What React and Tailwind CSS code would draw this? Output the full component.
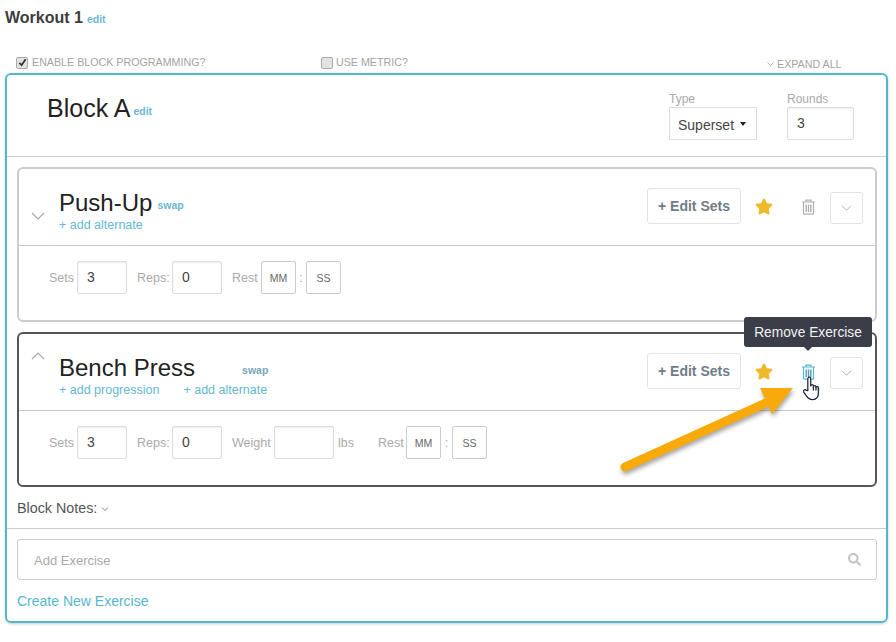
import { FaStar, FaSearch } from "react-icons/fa";

// Small chevron used by the collapse toggles and the row menu
const Chevron = ({ up, className }) => (
  <svg viewBox="0 0 14 8" className={className} fill="none" stroke="currentColor" strokeWidth="1.2">
    <polyline points={up ? "1,7 7,1 13,7" : "1,1 7,7 13,1"} />
  </svg>
);

const Trash = ({ className, bars }) => (
  <svg viewBox="0 0 15 16" className={className} fill="none" stroke="currentColor" strokeWidth="1.2">
    <path d="M1 3h13M5 3V1.2h5V3M2.5 3v11.2c0 .6.4 1 1 1h8c.6 0 1-.4 1-1V3" />
    <path d="M5.2 5.5v7.5M7.5 5.5v7.5M9.8 5.5v7.5" stroke={bars} strokeWidth="1.4" />
  </svg>
);

const Checkbox = ({ checked }) => (
  <div className="flex h-[12px] w-[12px] items-center justify-center rounded-[2px] border border-[#aaa] bg-[#e2e2e2]">
    {checked && (
      <svg viewBox="0 0 10 10" className="h-[9px] w-[9px]" fill="none" stroke="#333" strokeWidth="2">
        <polyline points="1.5,5.5 4,8 8.5,1.5" />
      </svg>
    )}
  </div>
);

const Field = ({ value, width }) => (
  <div className={`flex h-[33px] items-center rounded-[2px] border border-[#ddd] pl-[9px] text-[14px] text-[#444] shadow-[inset_0_1px_2px_rgba(0,0,0,0.08)] ${width}`}>
    {value}
  </div>
);

const TimeBox = ({ label }) => (
  <div className="flex h-[33px] w-[35px] items-center justify-center rounded-[2px] border border-[#ccc] pt-[3px] text-[10.5px] text-[#666]">
    {label}
  </div>
);

const Label = ({ children, className = "" }) => (
  <span className={`pt-[2px] text-[12.5px] text-[#aaa] ${className}`}>{children}</span>
);

const ExerciseHeader = ({ name, open, swapClass, children, hoverTrash }) => (
  <div className="flex h-[77px] border-b border-[#ccc]">
    <div className={`w-[40px] pl-[12px] ${open ? "pt-[18px]" : "pt-[43px]"}`}>
      <Chevron up={open} className="h-[8px] w-[14px] text-[#aaa]" />
    </div>
    <div className="flex-1 pt-[16px]">
      <div className="flex h-[33px] items-baseline">
        <span className="text-[24px] leading-[36px] text-[#222]">{name}</span>
        <span className={`-translate-y-[2px] text-[10.5px] font-bold ${swapClass}`}>swap</span>
      </div>
      <div className="flex gap-[24px] text-[12.5px] leading-[15px] text-[#62b9d2]">{children}</div>
    </div>
    <div className="flex items-start pt-[19px] pr-[12px]">
      <button className="h-[36px] w-[94px] rounded-[3px] border border-[#e3e3e3] text-[14px] font-bold text-[#6f7d89]">
        + Edit Sets
      </button>
      <FaStar className="ml-[14px] mt-[10px] h-[17px] w-[18px] text-[#efb928]" />
      {hoverTrash ? (
        <Trash className="ml-[28px] mt-[11px] h-[16px] w-[15px] text-[#56b7d0]" bars="#4a9fb6" />
      ) : (
        <Trash className="ml-[28px] mt-[11px] h-[16px] w-[15px] text-[#b0b0b0]" bars="#b0b0b0" />
      )}
      <div className="ml-[14px] mt-[4px] flex h-[32px] w-[33px] items-center justify-center rounded-[3px] border border-[#e3e3e3]">
        <Chevron className="h-[6px] w-[11px] text-[#aaa]" />
      </div>
    </div>
  </div>
);

export default function App() {
  return (
    <div className="relative h-[642px] w-[896px] overflow-hidden bg-white font-['Liberation_Sans',Arial,sans-serif]">
      {/* Workout title */}
      <div className="flex h-[27px] items-baseline gap-[4px] pl-[5px] pt-[6px]">
        <span className="text-[16px] font-bold text-[#3d3d3d]">Workout 1</span>
        <span className="text-[10.5px] font-bold text-[#6cb7d3]">edit</span>
      </div>

      {/* Options */}
      <div className="flex h-[46px] items-end pb-[2px] pl-[16px] text-[10.7px] text-[#a3a3a3]">
        <div className="flex w-[305px] items-center gap-[4px]">
          <Checkbox checked />
          <span className="-translate-y-[1px]">ENABLE BLOCK PROGRAMMING?</span>
        </div>
        <div className="flex w-[446px] items-center gap-[3px]">
          <Checkbox />
          <span className="-translate-y-[1px]">USE METRIC?</span>
        </div>
        <div className="flex translate-y-[1px] items-center gap-[3px]">
          <Chevron className="h-[4px] w-[7px] text-[#888]" />
          <span>EXPAND ALL</span>
        </div>
      </div>

      {/* Block card */}
      <div className="ml-[5px] h-[550px] w-[883px] rounded-[6px] border-2 border-[#53b7cf] shadow-[0_1px_3px_rgba(0,0,0,0.2)]">
        <div className="flex h-[82px] justify-between border-b border-[#ccc] pl-[40px] pr-[32px]">
          <div className="flex h-[47px] items-end gap-[3px]">
            <span className="text-[25px] leading-[28px] text-[#222]">Block A</span>
            <span className="pb-[4px] text-[10.5px] font-bold leading-[14px] text-[#6cb7d3]">edit</span>
          </div>
          <div className="flex gap-[30px] pt-[16px]">
            <div>
              <div className="text-[12px] leading-[16px] text-[#aaa]">Type</div>
              <div className="flex h-[33px] w-[88px] items-center gap-[6px] border border-[#ddd] pl-[8px] text-[14px] text-[#444]">
                <span className="pt-[4px]">Superset</span>
                <span className="h-0 w-0 border-x-[3px] border-t-[4px] border-x-transparent border-t-[#222]" />
              </div>
            </div>
            <div>
              <div className="text-[12px] leading-[16px] text-[#aaa]">Rounds</div>
              <Field value="3" width="w-[67px]" />
            </div>
          </div>
        </div>

        {/* Exercises */}
        <div className="ml-[10px] mr-[9px] mt-[10px] flex flex-col gap-[10px]">
          <div className="h-[155px] rounded-[6px] border-2 border-[#ccc]">
            <ExerciseHeader name="Push-Up" swapClass="ml-[5px] text-[#6cb7d3]">
              <span>+ add alternate</span>
            </ExerciseHeader>
            <div className="flex items-center pl-[30px] pt-[15px]">
              <Label className="w-[28px]">Sets</Label>
              <Field value="3" width="w-[50px]" />
              <Label className="ml-[10px] w-[35px]">Reps:</Label>
              <Field value="0" width="w-[50px]" />
              <Label className="ml-[10px] w-[29px]">Rest</Label>
              <TimeBox label="MM" />
              <Label className="w-[10px] text-center">:</Label>
              <TimeBox label="SS" />
            </div>
          </div>

          <div className="h-[155px] rounded-[6px] border-2 border-[#555]">
            <ExerciseHeader name="Bench Press" open hoverTrash swapClass="ml-[47px] text-[#7aa7ba]">
              <span>+ add progression</span>
              <span>+ add alternate</span>
            </ExerciseHeader>
            <div className="flex items-center pl-[30px] pt-[15px]">
              <Label className="w-[28px]">Sets</Label>
              <Field value="3" width="w-[50px]" />
              <Label className="ml-[10px] w-[35px]">Reps:</Label>
              <Field value="0" width="w-[50px]" />
              <Label className="ml-[10px] w-[42px]">Weight</Label>
              <Field value="" width="w-[60px]" />
              <Label className="ml-[4px] w-[40px]">lbs</Label>
              <Label className="w-[28px]">Rest</Label>
              <TimeBox label="MM" />
              <Label className="w-[11px] text-center">:</Label>
              <TimeBox label="SS" />
            </div>
          </div>
        </div>

        {/* Notes and add exercise */}
        <div className="flex h-[42px] items-center gap-[4px] border-b border-[#ccc] pl-[10px] pt-[2px] text-[14.3px] text-[#555]">
          Block Notes:
          <Chevron className="h-[4px] w-[8px] text-[#333]" />
        </div>
        <div className="ml-[10px] mr-[9px] mt-[10px] flex h-[41px] items-center justify-between rounded-[3px] border border-[#ccc] pl-[16px] pr-[15px] text-[13px] text-[#aaa]">
          <span className="pt-[2px]">Add Exercise</span>
          <FaSearch className="h-[13px] w-[13px] text-[#c4c4c4]" />
        </div>
        <div className="ml-[10px] mt-[12px] text-[14px] leading-[18px] text-[#57b7d0]">Create New Exercise</div>
      </div>

      {/* Tooltip over the trash icon */}
      <div className="absolute left-[744px] top-[317px] flex h-[30px] w-[128px] items-center justify-center rounded-[3px] bg-[#3b3d49] pt-[2px] text-[13.75px] text-[#f2f2f2]">
        Remove Exercise
        <span className="absolute left-[60px] top-[30px] h-0 w-0 border-x-[4px] border-t-[4px] border-x-transparent border-t-[#3b3d49]" />
      </div>

      {/* Annotation arrow */}
      <svg className="absolute left-[610px] top-[380px] h-[100px] w-[190px]" viewBox="0 0 190 100">
        <g className="drop-shadow-[1px_3px_2px_rgba(0,0,0,0.35)]">
          <path d="M15 87 L160 21" stroke="#f8aa0a" strokeWidth="9" strokeLinecap="round" />
          <polygon points="150,8 183,8 162,34" fill="#f8aa0a" />
        </g>
      </svg>

      {/* Hand cursor */}
      <svg className="absolute left-[802px] top-[376px] h-[25px] w-[21px]" viewBox="0 0 20 24" fill="#fff" stroke="#1f2530" strokeWidth="1.2" strokeLinejoin="round">
        <path d="M5.5 14V2.6c0-1.9 2.8-1.9 2.8 0V9.5c0-1.5 2.5-1.5 2.5 0v.8c0-1.5 2.5-1.5 2.5 0v.9c0-1.4 2.4-1.4 2.4 0V16c0 3.6-1.8 6.6-5.6 6.6-3.2 0-4.6-1.4-6-3.6L1.6 15.4c-1-1.7 1.2-3 2.4-1.6Z" />
        <path d="M10.8 10.5V14M13.3 11v3M15.7 11.5V14" fill="none" />
      </svg>
    </div>
  );
}
